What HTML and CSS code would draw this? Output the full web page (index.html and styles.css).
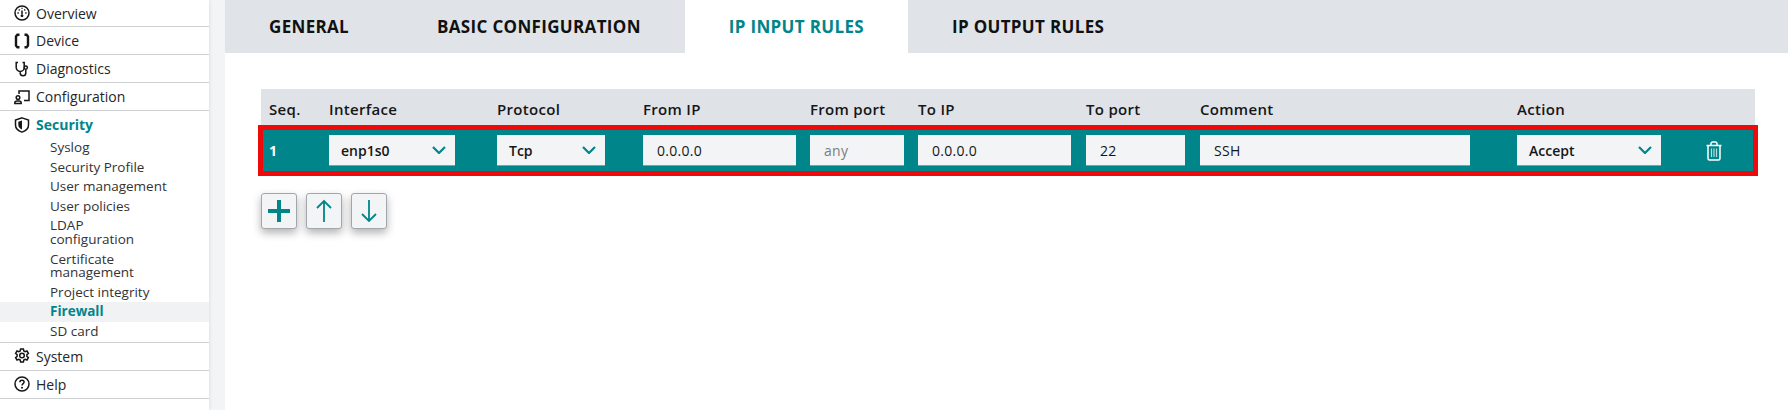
FILE: index.html
```html
<!DOCTYPE html>
<html lang="en">
<head>
    <meta charset="UTF-8">
    <title>Firewall</title>
    <link rel="stylesheet" href="styles.css">
</head>
<body>
    <div class="page">
        <nav class="sidebar">
            <a class="nav-item">
                <svg class="nav-icon" viewBox="0 0 16 16"><circle cx="8" cy="8" r="7"/><path d="M8 5.500v4M3.400 8h1.400M11.200 8h1.400M4.800 4.500l.9.9M11.200 4.500l-.9.9M8 2.800v1"/><circle cx="8" cy="10.800" r="1.400" class="fill"/></svg>
                Overview
            </a>
            <a class="nav-item">
                <svg class="nav-icon thick" viewBox="0 0 16 16"><path d="M5.500 1.800H3.400L2 3.400v9.200l1.400 1.600h2.100M10.500 1.800h2.100L14 3.400v9.200l-1.400 1.600h-2.100"/></svg>
                Device
            </a>
            <a class="nav-item">
                <svg class="nav-icon" viewBox="0 0 16 16"><path d="M4 1.500H2.200v5a4 4 0 0 0 8 0v-5H8.500M6.200 10.500v1.500a2.800 2.800 0 0 0 5.600 0V8.500"/><circle cx="11.800" cy="6.600" r="1.600"/></svg>
                Diagnostics
            </a>
            <a class="nav-item">
                <svg class="nav-icon" viewBox="0 0 16 16"><path d="M5 5V2h10v9.500H10"/><circle cx="4" cy="8.600" r="1.800"/><path d="M.8 14.500v-.6c0-1.200 1-1.900 2.200-1.900h2c1.200 0 2.200.7 2.200 1.900v.6z"/></svg>
                Configuration
            </a>
            <div class="nav-group">
                <a class="nav-item open">
                    <svg class="nav-icon" viewBox="0 0 16 16"><path d="M8 .9l6.500 2.200v5c0 3.500-3 5.900-6.500 7-3.500-1.100-6.500-3.500-6.500-7v-5z"/><path class="fill" d="M8 3.500l-3.700 1.300v3.300c0 2.100 1.700 3.700 3.700 4.500z"/></svg>
                    Security
                </a>
                <a class="sub-item">Syslog</a>
                <a class="sub-item">Security Profile</a>
                <a class="sub-item">User management</a>
                <a class="sub-item">User policies</a>
                <a class="sub-item">LDAP<br>configuration</a>
                <a class="sub-item">Certificate<br>management</a>
                <a class="sub-item">Project integrity</a>
                <a class="sub-item current">Firewall</a>
                <a class="sub-item">SD card</a>
            </div>
            <a class="nav-item">
                <svg class="nav-icon" viewBox="0 0 16 16"><path d="M6.600 1h2.800l.4 2 1.300.7 1.900-.7 1.400 2.400-1.500 1.300v1.600l1.500 1.300-1.400 2.400-1.900-.7-1.300.7-.4 2H6.600l-.4-2-1.300-.7-1.900.7-1.400-2.400 1.500-1.300V6.700L1.600 5.400 3 3l1.900.7L6.200 3z"/><circle cx="8" cy="7.500" r="2.300"/></svg>
                System
            </a>
            <a class="nav-item">
                <svg class="nav-icon" viewBox="0 0 16 16"><circle cx="8" cy="8" r="7"/><path d="M5.900 6.200c0-1.200.9-2 2.100-2s2.100.8 2.100 1.900c0 1.500-2.100 1.700-2.100 3.400"/><circle class="fill" cx="8" cy="11.700" r="1"/></svg>
                Help
            </a>
        </nav>

        <main class="content">
            <div class="tabs">
                <a class="tab">General</a>
                <a class="tab">Basic configuration</a>
                <a class="tab active">IP input rules</a>
                <a class="tab">IP output rules</a>
            </div>

            <div class="panel">
                <div class="rules-head cols">
                    <span class="seq-head">Seq.</span>
                    <span>Interface</span>
                    <span>Protocol</span>
                    <span>From IP</span>
                    <span>From port</span>
                    <span>To IP</span>
                    <span>To port</span>
                    <span>Comment</span>
                    <span>Action</span>
                </div>

                <div class="rule-row cols">
                    <span class="seq">1</span>
                    <div class="select w-interface">enp1s0
                        <svg class="chevron" viewBox="0 0 14 8"><path d="M1 1l6 6 6-6"/></svg>
                    </div>
                    <div class="select w-protocol">Tcp
                        <svg class="chevron" viewBox="0 0 14 8"><path d="M1 1l6 6 6-6"/></svg>
                    </div>
                    <input class="field w-ip" type="text" value="0.0.0.0">
                    <input class="field w-from-port" type="text" placeholder="any">
                    <input class="field w-ip" type="text" value="0.0.0.0">
                    <input class="field w-to-port" type="text" value="22">
                    <input class="field w-comment" type="text" value="SSH">
                    <div class="select w-action">Accept
                        <svg class="chevron" viewBox="0 0 14 8"><path d="M1 1l6 6 6-6"/></svg>
                    </div>
                    <svg class="trash" viewBox="0 0 16 20"><path d="M.5 4.500h15M5 4.500V2.800C5 1.700 5.800 1 6.800 1h2.400c1 0 1.800.7 1.800 1.800v1.700M2 4.500v13c0 .9.600 1.500 1.500 1.500h9c.9 0 1.500-.6 1.500-1.500v-13"/><path class="bars" d="M5.500 7.500v8.500M8 7.500v8.500M10.500 7.500v8.500"/></svg>
                </div>

                <div class="actions">
                    <button class="icon-btn"><svg viewBox="0 0 24 24"><path class="heavy" d="M1 12h22M12 1v22"/></svg></button>
                    <button class="icon-btn"><svg viewBox="0 0 24 24"><path d="M12 23V2M5 9l7-7 7 7"/></svg></button>
                    <button class="icon-btn"><svg viewBox="0 0 24 24"><path d="M12 1v21M5 15l7 7 7-7"/></svg></button>
                </div>
            </div>
        </main>
    </div>
</body>
</html>
```

FILE: styles.css
```css
*{
    margin: 0;
    padding: 0;
    box-sizing: border-box;
    font-family: "Open Sans", sans-serif;
}

html, body{
    height: 100%;
    overflow: hidden;
}

body{
    background-color: #f2f4f6;
    color: #161616;
}

.page{
    display: flex;
    height: 410px;
}

/* sidebar */
.sidebar{
    width: 209px;
    flex-shrink: 0;
    background-color: white;
    box-shadow: 1px 0 3px rgba(0,0,0,0.08);
}

.nav-item{
    display: flex;
    align-items: center;
    gap: 6px;
    height: 28px;
    padding-left: 14px;
    font-size: 14px;
    color: #262626;
    border-bottom: 1px solid #cfd2d4;
}

.nav-item:first-child{
    height: 27px;
}

.nav-group{
    border-bottom: 1px solid #cfd2d4;
}

.nav-item.open{
    height: 27px;
    border-bottom: none;
    color: #00858a;
    font-weight: 700;
}

.nav-icon{
    width: 16px;
    height: 16px;
    flex-shrink: 0;
    fill: none;
    stroke: #161616;
    stroke-width: 1.500;
}

.nav-icon.thick{
    stroke-width: 2.400;
}

.nav-icon .fill{
    fill: #161616;
    stroke: none;
}

.sub-item{
    display: block;
    padding: 3px 0 3px 50px;
    font-size: 13.500px;
    line-height: 13.600px;
    color: #333333;
}

.sub-item.current{
    background-color: #f0f2f4;
    color: #00858a;
    font-weight: 700;
}

/* main area */
.content{
    flex: 1;
    margin-left: 16px;
    background-color: white;
    min-width: 0;
}

.tabs{
    display: flex;
    height: 53px;
    background-color: #e0e4e8;
}

.tab{
    display: flex;
    align-items: center;
    padding: 0 44px;
    font-size: 17px;
    font-weight: 700;
    letter-spacing: 0.33px;
    text-transform: uppercase;
    color: #111111;
}

.tab.active{
    background-color: white;
    color: #00858a;
}

.panel{
    padding: 36px 33px 0 36px;
}

.cols{
    display: grid;
    align-items: center;
    --tracks: 168px 146px 167px 108px 168px 114px 317px 189px 1fr;
}

.rules-head{
    grid-template-columns: 68px var(--tracks);
    height: 36px;
    padding-top: 3px;
    background-color: #dfe3e8;
    font-size: 15px;
    font-weight: 600;
    letter-spacing: 0.3px;
    color: #161616;
}

.seq-head{
    padding-left: 8px;
}

.rule-row{
    grid-template-columns: 66px var(--tracks);
    height: 51px;
    margin: 0 -3px;
    background-color: #00858a;
    border: 5px solid #ee0a0a;
}

.seq{
    padding-left: 6px;
    font-size: 14px;
    font-weight: 700;
    color: white;
}

.select, .field{
    height: 31px;
    background-color: #f2f4f6;
    border: none;
    border-bottom: 1px solid #8d9a9c;
    font-size: 14px;
    color: #161616;
    outline: none;
}

.select{
    display: flex;
    align-items: center;
    justify-content: space-between;
    padding: 0 9px 0 12px;
    font-weight: 600;
}

.field{
    padding: 0 14px;
    letter-spacing: 0.3px;
}

.field::placeholder{
    color: #7d7d7d;
    opacity: 1;
}

.w-interface{ width: 126px; }
.w-protocol{ width: 108px; }
.w-ip{ width: 153px; }
.w-from-port{ width: 94px; }
.w-to-port{ width: 99px; }
.w-comment{ width: 270px; }
.w-action{ width: 144px; }

.chevron{
    width: 14px;
    height: 8px;
    fill: none;
    stroke: #00858a;
    stroke-width: 2.200;
}

.trash{
    width: 16px;
    height: 20px;
    justify-self: start;
    fill: none;
    stroke: white;
    stroke-width: 1.500;
}

.trash .bars{
    stroke: #b5dcde;
    stroke-width: 1.200;
}

.actions{
    display: flex;
    gap: 9px;
    margin-top: 17px;
}

.icon-btn{
    display: flex;
    align-items: center;
    justify-content: center;
    width: 36px;
    height: 36px;
    background-color: #f2f4f6;
    border: 1px solid #a3a7ab;
    border-radius: 3px;
    box-shadow: 0 4px 8px rgba(0,0,0,0.3);
}

.icon-btn svg{
    width: 24px;
    height: 24px;
    fill: none;
    stroke: #00858a;
    stroke-width: 1.800;
}

.icon-btn .heavy{
    stroke-width: 4;
}
```
